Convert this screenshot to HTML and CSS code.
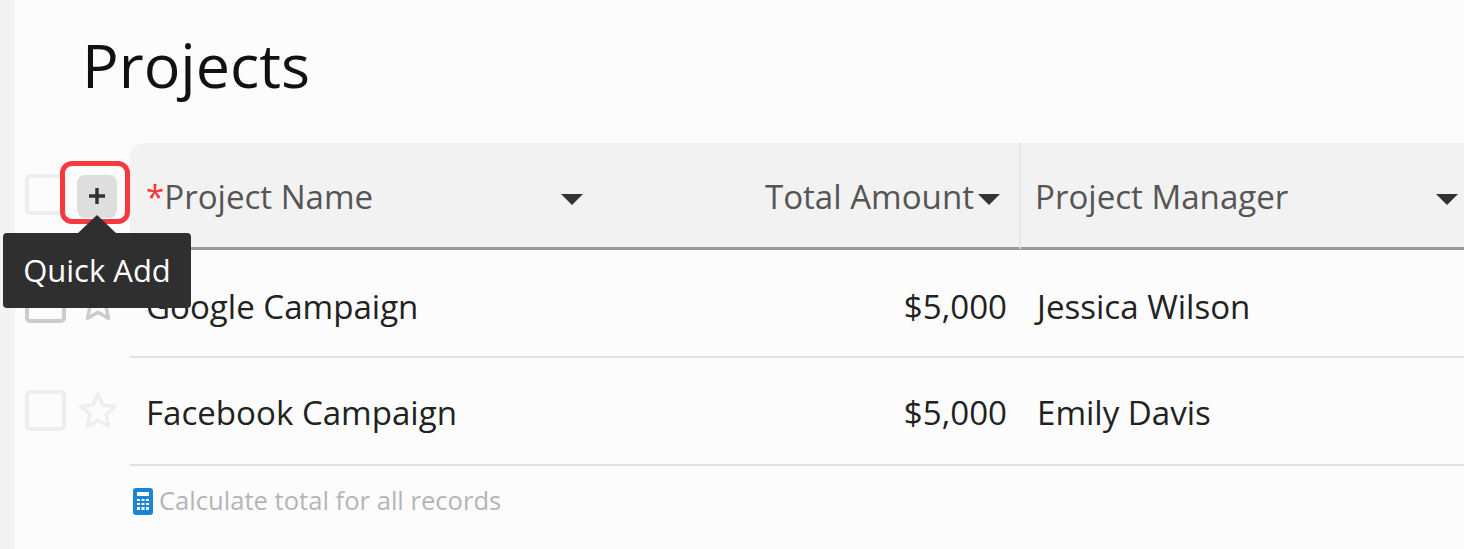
FILE: index.html
```html
<!doctype html>
<html>
<head>
	<meta charset="utf-8">
	<title>Projects</title>
	<link rel="stylesheet" href="styles.css">
</head>
<body>
	<div class="sidebar"></div>
	<div class="content">
		<h1>Projects</h1>
		<div class="row head">
			<div class="gutter">
				<span class="check"></span>
				<span class="add-btn">
					<svg width="20" height="20" viewBox="0 0 20 20"><path d="M10 2v16M2 10h16" stroke="#333" stroke-width="3.500"/></svg>
				</span>
				<span class="highlight"></span>
				<span class="tip">Quick Add</span>
			</div>
			<div class="cell name"><span><b class="req">*</b>Project Name</span><i class="caret"></i></div>
			<div class="cell amount"><span>Total Amount</span><i class="caret"></i></div>
			<div class="cell manager"><span>Project Manager</span><i class="caret"></i></div>
		</div>
		<div class="row first">
			<div class="gutter">
				<span class="check dark"></span>
				<svg class="star" width="40" height="38" viewBox="0 0 40 38"><path d="M20 3l5 11 12 1.400-8.900 8.100 2.400 11.800L20 29.400 9.500 35.300l2.400-11.800L3 15.400 15 14z" fill="none" stroke="#ccc" stroke-width="3.500" stroke-linejoin="round"/></svg>
			</div>
			<div class="cell name">Google Campaign</div>
			<div class="cell amount">$5,000</div>
			<div class="cell manager">Jessica Wilson</div>
		</div>
		<div class="row">
			<div class="gutter">
				<span class="check"></span>
				<svg class="star" width="40" height="38" viewBox="0 0 40 38"><path d="M20 3l5 11 12 1.400-8.900 8.100 2.400 11.800L20 29.400 9.500 35.300l2.400-11.800L3 15.400 15 14z" fill="none" stroke="#eee" stroke-width="3.500" stroke-linejoin="round"/></svg>
			</div>
			<div class="cell name">Facebook Campaign</div>
			<div class="cell amount">$5,000</div>
			<div class="cell manager">Emily Davis</div>
		</div>
		<div class="total">
			<svg width="20" height="27" viewBox="0 0 20 27"><rect width="20" height="27" rx="3" fill="#1a85d6"/><rect x="4" y="4" width="12" height="4" fill="#fff"/><path d="M4 11h3v2H4zM8.500 11h3v2h-3zM13 11h3v2h-3zM4 15h3v2H4zM8.500 15h3v2h-3zM13 15h3v2h-3zM4 19h3v3H4zM8.500 19h3v3h-3zM13 19h3v3h-3z" fill="#fff"/></svg>
			<span>Calculate total for all records</span>
		</div>
	</div>
</body>
</html>
```

FILE: styles.css
```css
html, body {
	height: 100%;
}
body {
	margin: 0;
	display: flex;
	overflow: hidden;
	background: #fcfcfc;
	color: #222;
	font-family: "Open Sans", sans-serif;
	font-size: 33.100px;
}
.sidebar {
	width: 15px;
	flex: none;
	background: #f3f3f3;
}
.content {
	flex: 1;
	min-width: 0;
}
h1 {
	margin: 0;
	height: 143px;
	padding: 23px 0 0 67px;
	box-sizing: border-box;
	font-size: 61px;
	line-height: 84px;
	font-weight: 400;
	color: #111;
}
.row {
	display: grid;
	grid-template-columns: 115px 455px 436px 1fr;
	height: 108px;
	position: relative;
}
.row > .cell {
	border-bottom: 2px solid #e2e2e2;
	padding-top: 3px;
}
.row.first > .cell {
	padding-top: 7px;
}
.cell {
	display: flex;
	align-items: center;
	padding: 0 0 0 16px;
	white-space: nowrap;
	overflow: hidden;
}
.amount {
	justify-content: flex-end;
	padding: 0 14px 0 0;
}
.manager {
	padding-left: 16px;
}
.head {
	height: 107px;
}
.row.head > .cell {
	background: #f2f2f2;
	color: #555;
	border-bottom: 3px solid #9a9a9a;
	padding-top: 3px;
}
.head .name {
	justify-content: space-between;
	border-top-left-radius: 14px;
	padding-right: 0;
}
.head .name .caret {
	margin-right: 2px;
}
.head .amount {
	border-right: 2px solid #e6e6e6;
	padding-right: 19px;
}
.head .manager {
	justify-content: space-between;
	padding-left: 14px;
	padding-right: 6px;
}
.req {
	color: #f33;
	font-weight: 400;
}
.caret {
	width: 0;
	height: 0;
	margin-top: 6px;
	border-style: solid;
	border-width: 11px 11px 0;
	border-color: #333 transparent transparent;
}
.head .amount .caret {
	margin-left: 4px;
}
.gutter {
	position: relative;
	display: flex;
	align-items: center;
	padding: 0 0 4px 10px;
	gap: 10px;
}
.check {
	width: 33px;
	height: 33px;
	border: 4px solid #eee;
	border-radius: 5px;
	flex: none;
}
.check.dark {
	border-color: #ccc;
}
.star {
	flex: none;
	margin-left: 2px;
}
.add-btn {
	width: 40px;
	height: 43px;
	margin: 3px 0 0 1px;
	border-radius: 8px;
	background: #dedede;
	display: flex;
	align-items: center;
	justify-content: center;
	flex: none;
}
.highlight {
	position: absolute;
	left: 45px;
	top: 18px;
	width: 60px;
	height: 53px;
	border: 5px solid #f4393f;
	border-radius: 12px;
}
.tip {
	position: absolute;
	left: -12px;
	top: 90px;
	width: 188px;
	height: 75px;
	background: #2f2f2f;
	color: #fff;
	border-radius: 4px;
	font-size: 31px;
	line-height: 75px;
	text-align: center;
	z-index: 2;
}
.tip::before {
	content: "";
	position: absolute;
	left: 75px;
	top: -18px;
	border-style: solid;
	border-width: 0 19px 18px;
	border-color: transparent transparent #2f2f2f;
}
.total {
	display: flex;
	align-items: center;
	gap: 6px;
	margin: 19px 0 0 118px;
	color: #b5b5b5;
	font-size: 25.600px;
	line-height: 32px;
}
```
